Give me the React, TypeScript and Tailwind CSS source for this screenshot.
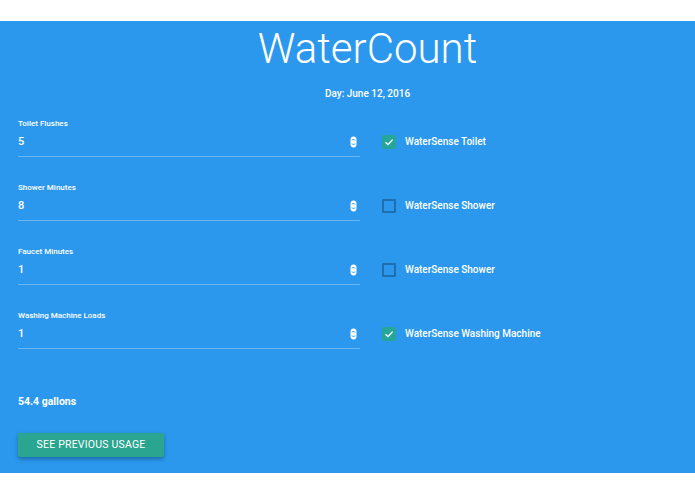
import React from "react";

const Spinner = () => (
  <svg width="7" height="12" viewBox="0 0 7 12" className="shrink-0">
    <rect x="0.5" y="0.5" width="6" height="11" rx="3" fill="#ffffff" />
    <path d="M2 4.5 L3.5 3 L5 4.5" stroke="#2b98ee" strokeWidth="1" fill="none" />
    <path d="M2 7.5 L3.5 9 L5 7.5" stroke="#2b98ee" strokeWidth="1" fill="none" />
  </svg>
);

const Check = ({ checked }: { checked: boolean }) =>
  checked ? (
    <div className="w-[14px] h-[14px] bg-[#26a69a] flex items-center justify-center rounded-[1px]">
      <svg width="10" height="10" viewBox="0 0 10 10">
        <path d="M1.5 5.2 L4 7.6 L8.6 2.6" stroke="#ffffff" strokeWidth="1.4" fill="none" />
      </svg>
    </div>
  ) : (
    <div className="w-[14px] h-[14px] border-2 border-[#1d6fae] rounded-[1px]" />
  );

const rows = [
  { label: "Toilet Flushes", value: "5", check: "WaterSense Toilet", checked: true },
  { label: "Shower Minutes", value: "8", check: "WaterSense Shower", checked: false },
  { label: "Faucet Minutes", value: "1", check: "WaterSense Shower", checked: false },
  { label: "Washing Machine Loads", value: "1", check: "WaterSense Washing Machine", checked: true },
];

export default function App() {
  return (
    <div className="w-[695px] h-[494px] bg-white pt-[21px]" style={{ fontFamily: "Roboto, 'Liberation Sans', sans-serif" }}>
      <div className="h-[452px] bg-[#2b98ee] text-white flex flex-col">
        <div className="pl-[40px] flex flex-col items-center">
          <div className="text-[42px] font-light leading-none mt-[7px]">WaterCount</div>
          <div className="text-[10px] font-medium mt-[16px]">Day: June 12, 2016</div>
        </div>
        <div className="flex flex-col mt-[18px]">
          {rows.map((r) => (
            <div key={r.label} className="flex items-start h-[64px]">
              <div className="w-[342px] ml-[18px]">
                <div className="text-[8px] font-medium leading-[10px]">{r.label}</div>
                <div className="flex items-center justify-between h-[20px] mt-[3px] pr-[3px]">
                  <span className="text-[11px] font-medium">{r.value}</span>
                  <Spinner />
                </div>
                <div className="h-px bg-white/30 mt-[4px]" />
              </div>
              <div className="ml-[22px] mt-[15px] flex items-center gap-[9px]">
                <Check checked={r.checked} />
                <span className="text-[10px] font-medium">{r.check}</span>
              </div>
            </div>
          ))}
        </div>
        <div className="ml-[18px] mt-[19px] text-[10.5px] font-bold">54.4 gallons</div>
        <div className="ml-[18px] mt-[21px]">
          <button className="w-[146px] h-[24px] bg-[#2aa58f] text-white text-[10.5px] tracking-[0.2px] shadow-[0_2px_4px_rgba(0,0,0,0.3)] rounded-[2px]">
            SEE PREVIOUS USAGE
          </button>
        </div>
      </div>
    </div>
  );
}
